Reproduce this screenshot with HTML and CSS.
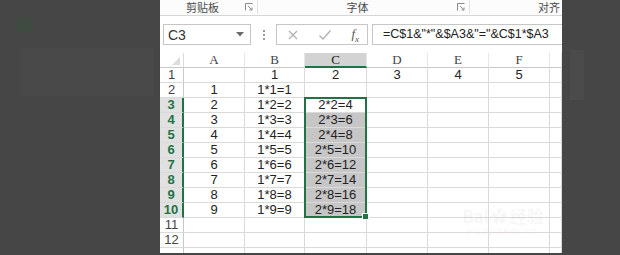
FILE: index.html
```html
<!DOCTYPE html>
<html lang="zh-CN">
<head>
    <meta charset="UTF-8">
    <title>Excel 乘法表</title>
    <link rel="stylesheet" href="styles.css">
</head>
<body>
    <div class="backdrop backdrop-left">
        <div class="ghost-icon"></div>
        <div class="ghost-bar"></div>
    </div>
    <div class="excel">
        <div class="ribbon">
            <div class="group group-clip">
                <span class="group-label">剪贴板</span>
                <svg class="launcher" width="8" height="8" viewBox="0 0 8 8"><path d="M0.5 7.5V0.5H7.5" fill="none" stroke="#8a8a8a"/><path d="M3 3L7 7M7 4.5V7H4.5" fill="none" stroke="#8a8a8a"/></svg>
            </div>
            <div class="group group-font">
                <span class="group-label">字体</span>
                <svg class="launcher" width="8" height="8" viewBox="0 0 8 8"><path d="M0.5 7.5V0.5H7.5" fill="none" stroke="#8a8a8a"/><path d="M3 3L7 7M7 4.5V7H4.5" fill="none" stroke="#8a8a8a"/></svg>
            </div>
            <div class="group group-align">
                <span class="group-label">对齐</span>
            </div>
        </div>
        <div class="formula-bar">
            <div class="name-box">
                <span>C3</span>
                <svg width="8" height="5" viewBox="0 0 8 5"><path d="M0 0H8L4 4.5Z" fill="#6b6b6b"/></svg>
            </div>
            <div class="grip"><i></i><i></i><i></i></div>
            <div class="fx-box">
                <svg width="12" height="12" viewBox="0 0 12 12"><path d="M2 2L10 10M10 2L2 10" stroke="#b0b0b0" stroke-width="1.2"/></svg>
                <svg width="14" height="12" viewBox="0 0 14 12"><path d="M1.5 6.5L5 10L12.5 1.5" fill="none" stroke="#b0b0b0" stroke-width="1.3"/></svg>
                <span class="fx">f<sub>x</sub></span>
            </div>
            <div class="formula">=C$1&amp;"*"&amp;$A3&amp;"="&amp;C$1*$A3</div>
        </div>
        <div class="sheet">
            <div class="corner"><span class="corner-mark"></span></div>
            <div class="col-head">A</div>
            <div class="col-head">B</div>
            <div class="col-head active">C</div>
            <div class="col-head">D</div>
            <div class="col-head">E</div>
            <div class="col-head">F</div>
            <div class="col-head"></div>

            <div class="row-head">1</div>
            <div class="cell"></div><div class="cell">1</div><div class="cell">2</div><div class="cell">3</div><div class="cell">4</div><div class="cell">5</div><div class="cell"></div>

            <div class="row-head">2</div>
            <div class="cell">1</div><div class="cell">1*1=1</div><div class="cell"></div><div class="cell"></div><div class="cell"></div><div class="cell"></div><div class="cell"></div>

            <div class="row-head active">3</div>
            <div class="cell">2</div><div class="cell">1*2=2</div><div class="cell">2*2=4</div><div class="cell"></div><div class="cell"></div><div class="cell"></div><div class="cell"></div>

            <div class="row-head active">4</div>
            <div class="cell">3</div><div class="cell">1*3=3</div><div class="cell picked">2*3=6</div><div class="cell"></div><div class="cell"></div><div class="cell"></div><div class="cell"></div>

            <div class="row-head active">5</div>
            <div class="cell">4</div><div class="cell">1*4=4</div><div class="cell picked">2*4=8</div><div class="cell"></div><div class="cell"></div><div class="cell"></div><div class="cell"></div>

            <div class="row-head active">6</div>
            <div class="cell">5</div><div class="cell">1*5=5</div><div class="cell picked">2*5=10</div><div class="cell"></div><div class="cell"></div><div class="cell"></div><div class="cell"></div>

            <div class="row-head active">7</div>
            <div class="cell">6</div><div class="cell">1*6=6</div><div class="cell picked">2*6=12</div><div class="cell"></div><div class="cell"></div><div class="cell"></div><div class="cell"></div>

            <div class="row-head active">8</div>
            <div class="cell">7</div><div class="cell">1*7=7</div><div class="cell picked">2*7=14</div><div class="cell"></div><div class="cell"></div><div class="cell"></div><div class="cell"></div>

            <div class="row-head active">9</div>
            <div class="cell">8</div><div class="cell">1*8=8</div><div class="cell picked">2*8=16</div><div class="cell"></div><div class="cell"></div><div class="cell"></div><div class="cell"></div>

            <div class="row-head active">10</div>
            <div class="cell">9</div><div class="cell">1*9=9</div><div class="cell picked">2*9=18</div><div class="cell"></div><div class="cell"></div><div class="cell"></div><div class="cell"></div>

            <div class="row-head">11</div>
            <div class="cell"></div><div class="cell"></div><div class="cell"></div><div class="cell"></div><div class="cell"></div><div class="cell"></div><div class="cell"></div>

            <div class="row-head">12</div>
            <div class="cell"></div><div class="cell"></div><div class="cell"></div><div class="cell"></div><div class="cell"></div><div class="cell"></div><div class="cell"></div>

            <div class="row-head"></div>
            <div class="cell"></div><div class="cell"></div><div class="cell"></div><div class="cell"></div><div class="cell"></div><div class="cell"></div><div class="cell"></div>

            <div class="selection"><span class="fill-handle"></span></div>
            <div class="watermark">
                <div class="wm-logo">Bai<span class="paw">✿</span>经验</div>
                <div class="wm-url">jingyan.baidu.com</div>
            </div>
        </div>
    </div>
    <div class="backdrop backdrop-right">
        <div class="ghost-streak"></div>
    </div>
</body>
</html>
```

FILE: styles.css
```css
body {
    margin: 0;
    width: 620px;
    height: 255px;
    display: flex;
    background-color: #464646;
    font-family: "Liberation Sans", Arial, sans-serif;
    overflow: hidden;
}
.backdrop {
    position: relative;
    height: 100%;
}
.backdrop-left {
    width: 160px;
}
.backdrop-right {
    flex: 1;
}
.ghost-icon {
    position: absolute;
    left: 17px;
    top: 17px;
    width: 15px;
    height: 15px;
    background-color: #3f4a40;
}
.ghost-bar {
    position: absolute;
    left: 20px;
    top: 48px;
    width: 134px;
    height: 48px;
    background-color: #494949;
}
.ghost-streak {
    position: absolute;
    left: 8px;
    top: 50px;
    width: 14px;
    height: 50px;
    background-color: #4b4b4b;
}
.excel {
    width: 402px;
    height: 253px;
    background-color: #fff;
    display: flex;
    flex-direction: column;
    overflow: hidden;
}
.ribbon {
    display: flex;
    height: 15px;
    border-bottom: 1px solid #d6d6d6;
    background-color: #fcfcfc;
    font-family: "Noto Sans CJK SC", sans-serif;
    font-size: 11px;
    color: #4a4a4a;
}
.group {
    display: flex;
    align-items: flex-start;
    border-right: 1px solid #e2e2e2;
    height: 14px;
}
.group-label {
    flex: 1;
    text-align: center;
    line-height: 14px;
    white-space: nowrap;
}
.launcher {
    margin: 3px 4px 0 0;
}
.group-clip {
    width: 97px;
}
.group-font {
    width: 211px;
}
.group-align {
    flex: 1;
    border-right: none;
}
.group-align .group-label {
    text-align: left;
    padding-left: 68px;
}
.formula-bar {
    display: flex;
    align-items: center;
    height: 37px;
    padding-left: 3px;
}
.name-box {
    width: 88px;
    height: 21px;
    border: 1px solid #c6c6c6;
    display: flex;
    align-items: center;
    justify-content: space-between;
    padding: 0 6px 0 4px;
    box-sizing: border-box;
    font-size: 14px;
    color: #333;
}
.grip {
    width: 25px;
    display: flex;
    flex-direction: column;
    align-items: center;
    gap: 2px;
}
.grip i {
    width: 2px;
    height: 2px;
    background-color: #9a9a9a;
}
.fx-box {
    width: 92px;
    height: 21px;
    box-sizing: border-box;
    border: 1px solid #c6c6c6;
    display: flex;
    align-items: center;
    justify-content: space-between;
    padding: 0 8px 0 10px;
}
.fx {
    font-family: "Liberation Serif", serif;
    font-style: italic;
    font-size: 13px;
    color: #555;
}
.fx sub {
    font-size: 9px;
}
.formula {
    flex: 1;
    margin-left: 4px;
    height: 21px;
    box-sizing: border-box;
    border: 1px solid #c6c6c6;
    border-right: none;
    padding-left: 10px;
    line-height: 19px;
    font-size: 12.5px;
    color: #222;
    white-space: nowrap;
}
.sheet {
    position: relative;
    flex: 1;
    display: grid;
    grid-template-columns: 24px 61px 60px 62px 61px 61px 61px 1fr;
    grid-auto-rows: 15px;
    font-size: 13px;
    color: #222;
    overflow: hidden;
}
.corner, .col-head, .row-head, .cell {
    box-sizing: border-box;
    border-right: 1px solid #dadada;
    border-bottom: 1px solid #dadada;
    display: flex;
    align-items: center;
    justify-content: center;
    line-height: 14px;
}
.corner {
    position: relative;
    border-bottom-color: #c8c8c8;
}
.corner-mark {
    position: absolute;
    right: 3px;
    bottom: 2px;
    width: 0;
    height: 0;
    border-left: 8px solid transparent;
    border-bottom: 8px solid #dcdcdc;
}
.col-head {
    font-family: "Liberation Serif", serif;
    color: #444;
    border-bottom-color: #c8c8c8;
    border-right-color: #e6e6e6;
}
.col-head.active {
    background-color: #d3d3d3;
    color: #222;
    border-bottom: 2px solid #217346;
}
.row-head {
    color: #444;
    border-right-color: #c8c8c8;
}
.row-head.active {
    background-color: #e1e1e1;
    color: #217346;
    font-weight: bold;
    border-right: 2px solid #217346;
}
.cell.picked {
    background-color: #c6c6c6;
}
.selection {
    position: absolute;
    left: 144px;
    top: 44px;
    width: 63px;
    height: 121px;
    border: 2px solid #217346;
    box-sizing: border-box;
}
.fill-handle {
    position: absolute;
    right: -4px;
    bottom: -4px;
    width: 5px;
    height: 5px;
    background-color: #217346;
    border: 1px solid #fff;
}
.watermark {
    position: absolute;
    left: 302px;
    top: 150px;
    color: rgba(0, 0, 0, 0.05);
    text-align: center;
}
.wm-logo {
    font-size: 17px;
    font-weight: bold;
    font-family: "Noto Sans CJK SC", sans-serif;
}
.paw {
    margin: 0 2px;
}
.wm-url {
    font-size: 9px;
    margin-top: -2px;
}
```
